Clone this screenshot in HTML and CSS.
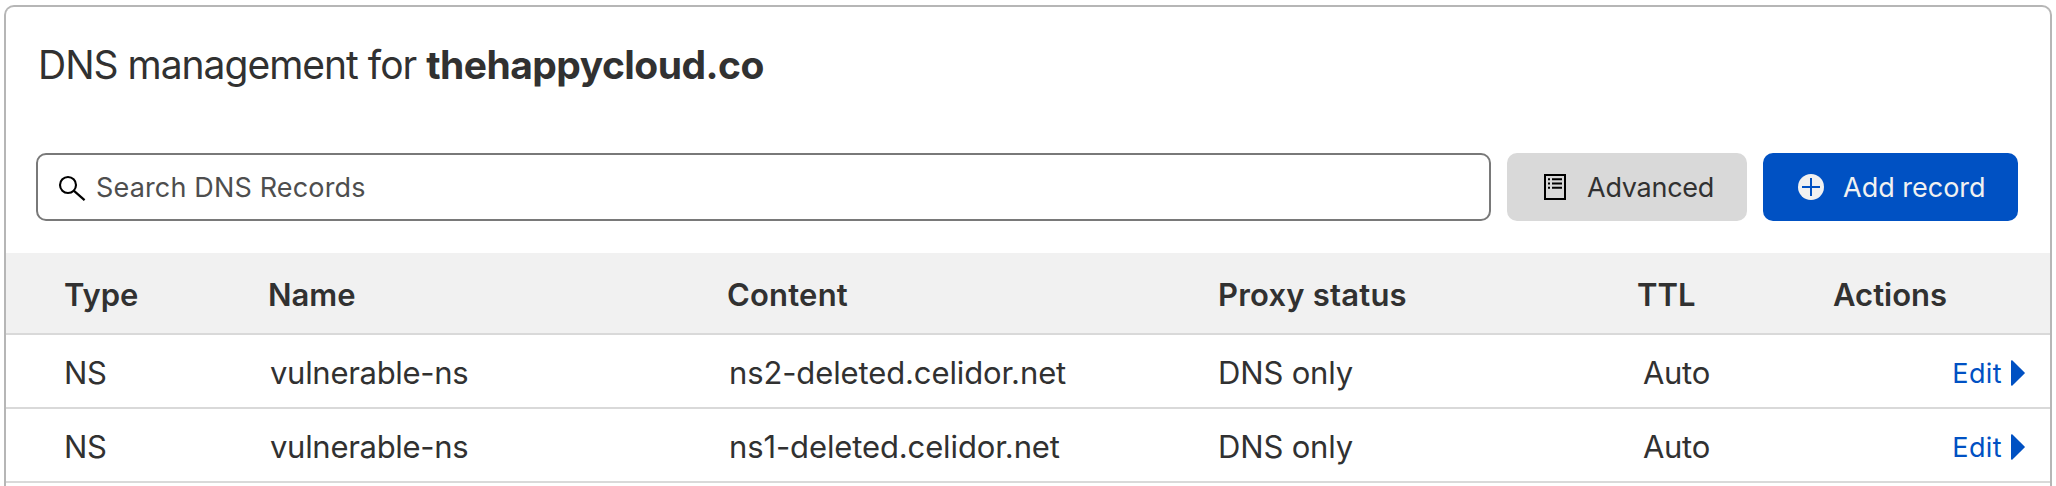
FILE: index.html
```html
<!DOCTYPE html>
<html lang="en">
<head>
<meta charset="utf-8">
<title>DNS management</title>
<link rel="stylesheet" href="styles.css">
</head>
<body>
<main class="card">
  <h1 class="title">DNS management for <strong class="domain">thehappycloud.co</strong></h1>
  <div class="toolbar">
    <div class="search">
      <svg class="search-icon" width="28" height="28" viewBox="0 0 28 28" fill="none" stroke="#000" stroke-width="2.1"><circle cx="10" cy="12" r="8"/><path d="M15.7 17.7L26.6 27.2" stroke-width="2.2"/></svg>
      <span class="placeholder">Search DNS Records</span>
    </div>
    <button class="btn btn-advanced">
      <svg class="doc-icon" width="22" height="26" viewBox="0 0 22 26"><rect x="1" y="1" width="20" height="24" fill="none" stroke="#000" stroke-width="2"/><path d="M4 5.2h2M4 9.4h2M4 13.8h2M8 5.2h10M8 9.4h10M8 13.8h10" stroke="#000" stroke-width="2"/></svg>
      <span class="label-advanced">Advanced</span>
    </button>
    <button class="btn btn-add">
      <svg class="plus-icon" width="26" height="26" viewBox="0 0 26 26"><circle cx="13" cy="13" r="13" fill="#f1f1f1"/><path d="M13 4v18M4 13h18" stroke="#0051c3" stroke-width="2"/></svg>
      <span>Add record</span>
    </button>
  </div>
  <div class="table">
    <div class="row head">
      <span>Type</span><span>Name</span><span class="content-head">Content</span><span class="proxy-head">Proxy status</span><span>TTL</span><span>Actions</span>
    </div>
    <div class="row record">
      <span class="type">NS</span><span class="name">vulnerable-ns</span><span class="content">ns2-deleted.celidor.net</span><span class="proxy">DNS only</span><span class="ttl">Auto</span>
      <a class="edit">Edit<svg class="caret" width="14" height="26" viewBox="0 0 14 26"><path d="M0 1.2Q0 0 1.2 .3L13.6 12.4Q14.2 13 13.6 13.6L1.2 25.7Q0 26 0 24.8Z" fill="#0051c3"/></svg></a>
    </div>
    <div class="row record">
      <span class="type">NS</span><span class="name">vulnerable-ns</span><span class="content">ns1-deleted.celidor.net</span><span class="proxy">DNS only</span><span class="ttl">Auto</span>
      <a class="edit">Edit<svg class="caret" width="14" height="26" viewBox="0 0 14 26"><path d="M0 1.2Q0 0 1.2 .3L13.6 12.4Q14.2 13 13.6 13.6L1.2 25.7Q0 26 0 24.8Z" fill="#0051c3"/></svg></a>
    </div>
  </div>
</main>
</body>
</html>
```
FILE: styles.css
```css
* { box-sizing: border-box; }
body {
  margin: 0;
  height: 486px;
  padding: 5px 4px 0;
  background: #fff;
  color: #313131;
  font-family: Inter, "Liberation Sans", sans-serif;
}
.card {
  height: 481px;
  border: 2px solid #b6b6b6;
  border-bottom: 0;
  border-radius: 10px 10px 0 0;
  background: #fff;
}
.title {
  margin: 0 0 65px;
  padding: 35px 0 0 32px;
  font-size: 39px;
  line-height: 46px;
  font-weight: 400;
  letter-spacing: -1px;
  white-space: nowrap;
}
.domain { font-weight: 700; letter-spacing: -0.54px; }
.toolbar {
  display: flex;
  gap: 16px;
  height: 68px;
  margin: 0 32px 32px 30px;
  font-size: 27px;
}
.search {
  flex: 1;
  display: flex;
  align-items: center;
  gap: 10px;
  padding-left: 20px;
  border: 2px solid #797979;
  border-radius: 10px;
}
.placeholder { color: #4e4e4e; letter-spacing: 0.16px; }
.btn {
  display: flex;
  align-items: center;
  border: 0;
  border-radius: 10px;
  font: inherit;
  color: #313131;
  white-space: nowrap;
}
.btn-advanced { width: 240px; padding: 0 0 0 37px; gap: 21px; background: #d9d9d9; }
.label-advanced { letter-spacing: -0.25px; }
.btn-add { width: 255px; padding: 0 0 0 35px; gap: 19px; background: #0051c3; color: #f1f1f1; }
.row {
  display: grid;
  grid-template-columns: 204px 459px 491px 419px 196px 1fr;
  align-items: center;
  padding: 2px 0 0 58px;
  border-bottom: 2px solid #d9d9d9;
  font-size: 31px;
  white-space: nowrap;
}
.head { height: 82px; background: #f1f1f1; font-weight: 600; }
.content-head { letter-spacing: 0.2px; }
.proxy-head { letter-spacing: 0.2px; }
.record { height: 74px; }
.type { letter-spacing: -0.3px; }
.name { padding-left: 2px; letter-spacing: -0.3px; }
.content { padding-left: 2px; letter-spacing: -0.12px; }
.proxy { letter-spacing: -0.17px; }
.ttl { padding-left: 6px; letter-spacing: -0.3px; }
.edit {
  display: flex;
  align-items: center;
  justify-content: flex-end;
  gap: 9px;
  padding: 2px 25px 0 0;
  color: #0051c3;
  font-size: 27px;
  letter-spacing: 0.4px;
}
```
